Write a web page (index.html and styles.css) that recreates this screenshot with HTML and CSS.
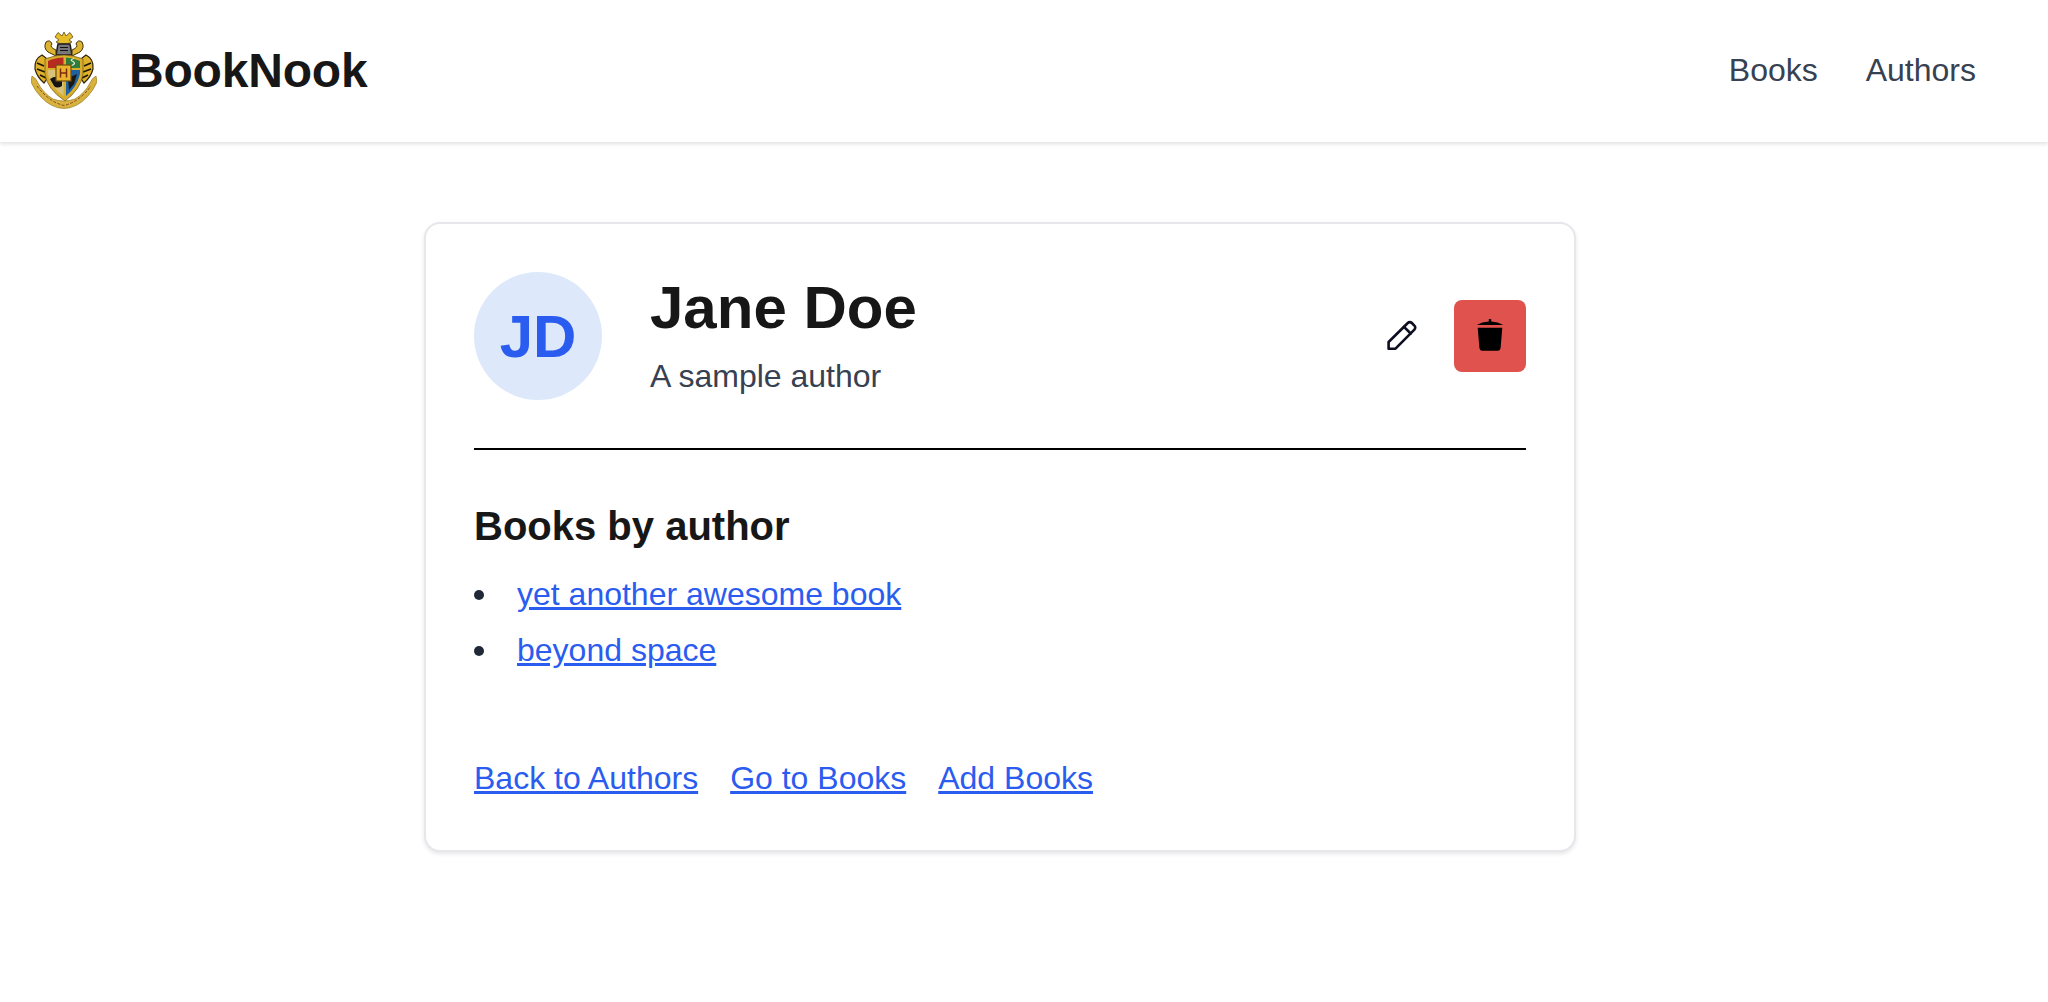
FILE: index.html
```html
<!DOCTYPE html>
<html lang="en">
<head>
<meta charset="utf-8">
<title>BookNook</title>
<link rel="stylesheet" href="styles.css">
</head>
<body>
<header class="topbar">
  <a class="brand" href="#">
    <svg class="crest" viewBox="0 0 66 80" aria-hidden="true">
      <path d="M1 45 Q5 47 7 52 Q12 62 22 68 Q33 72 44 68 Q54 62 59 52 Q61 47 65 45 L66 51 Q62 60 56 66 Q46 77 33 77.500 Q20 77 10 66 Q4 60 0 51 Z" fill="#d8b23f" stroke="#9c7a20" stroke-width=".7"/>
      <path d="M6 55 Q18 71 33 74.500 Q48 71 60 55" fill="none" stroke="#7d3f1b" stroke-width=".9" stroke-dasharray="3 1.500"/>
      <path d="M33 1 L35 5 L39 1.500 L42 6 L38 9 L41 11 L36 13 H30 L25 11 L28 9 L24 6 L27 1.500 L31 5 Z" fill="#e7bd2a" stroke="#4d3b0c" stroke-width=".7"/>
      <path d="M27 13 H39 L41 24 H25 Z" fill="#77777c" stroke="#1d1d1d" stroke-width="1.500"/>
      <path d="M29 16.500 H37 M29 19.500 H37" stroke="#111" stroke-width="1.200"/>
      <path d="M25 25 L17 21 Q12 17 15 11 Q19 8 21 13 Q18 16 25 19 Z" fill="#dcb42f" stroke="#3f300b" stroke-width="1"/>
      <path d="M41 25 L49 21 Q54 17 51 11 Q47 8 45 13 Q48 16 41 19 Z" fill="#dcb42f" stroke="#3f300b" stroke-width="1"/>
      <path d="M11 24 Q3 28 4 38 Q6 46 13 52 L17 46 L15 27 Z" fill="#e0b22c" stroke="#2f240a" stroke-width="1.200"/>
      <path d="M6 32 L13 35 M6 38 L14 41 M9 44 L15 47" stroke="#1d180a" stroke-width="1.800"/>
      <path d="M55 24 Q63 28 62 38 Q60 46 53 52 L49 46 L51 27 Z" fill="#e0b22c" stroke="#2f240a" stroke-width="1.200"/>
      <path d="M60 32 L53 35 M60 38 L52 41 M57 44 L51 47" stroke="#1d180a" stroke-width="1.800"/>
      <path d="M14 28 Q24 24 33 24 Q42 24 52 28 L52 43 Q50 58 34 70 Q16 58 14 43 Z" fill="#d9ae2c" stroke="#6b5312" stroke-width=".7"/>
      <path d="M17 30 Q24 26.500 32.500 26.500 V37 H17 Z" fill="#b72a20"/>
      <path d="M35 26.500 Q42 26.500 49 30 V37 H35 Z" fill="#2e7d3c"/>
      <path d="M17 39 H32.500 V65 Q20 56 17 43 Z" fill="#d8c27a"/>
      <path d="M35 39 H49 V43 Q46 56 35 65 Z" fill="#1f62a3"/>
      <path d="M19 48 Q24 44 31 47 L31 55 Q26 58 23 55 Z" fill="#151412"/>
      <path d="M37 47 L46 43 L43 53 L38 59 Z" fill="#1a1810"/>
      <path d="M39 35 Q46 33 42 30.500 Q38 29 43 27.500" fill="none" stroke="#e9e6d6" stroke-width="1.300"/>
      <rect x="25" y="34" width="15" height="16" fill="#e9b42b" stroke="#6f4d10" stroke-width="1.200"/>
      <path d="M29.500 37.500 V46.500 M35.500 37.500 V46.500 M29.500 42 H35.500" stroke="#7c2b12" stroke-width="1.500"/>
    </svg>
    <span class="brand-name">BookNook</span>
  </a>
  <nav class="nav">
    <a href="#">Books</a>
    <a href="#">Authors</a>
  </nav>
</header>
<main class="page">
  <section class="card">
    <div class="author">
      <div class="avatar">JD</div>
      <div class="author-info">
        <h1>Jane Doe</h1>
        <p>A sample author</p>
      </div>
      <div class="actions">
        <button class="icon-btn" type="button" aria-label="Edit">
          <svg viewBox="0 0 34 34" width="34" height="34" fill="none" stroke="#0e0e22" stroke-width="2.600" stroke-linejoin="round" stroke-linecap="round"><path d="M3.600 29.700 V23 L22.800 4 a2.800 2.800 0 0 1 4 0 l2.600 2.600 a2.800 2.800 0 0 1 0 4 L10.500 29.700 Z"/><path d="M19 7.800 L25.700 14.500"/></svg>
        </button>
        <button class="icon-btn danger" type="button" aria-label="Delete">
          <svg viewBox="0 -1 32 34" width="32" height="34" fill="#000"><path d="M2.700 5 Q8 2 14.800 1.600 V-1 H17.200 V1.600 Q24 2 29.300 5 Z"/><path d="M3.700 7.700 H28.300 L26.600 28 Q26.300 30.700 24 30.700 H8 Q5.700 30.700 5.400 28 Z"/></svg>
        </button>
      </div>
    </div>
    <hr class="rule">
    <h2>Books by author</h2>
    <ul class="books">
      <li><a href="#">yet another awesome book</a></li>
      <li><a href="#">beyond space</a></li>
    </ul>
    <div class="links">
      <a href="#">Back to Authors</a>
      <a href="#">Go to Books</a>
      <a href="#">Add Books</a>
    </div>
  </section>
</main>
</body>
</html>
```
FILE: styles.css
```css
* { box-sizing: border-box; }
html, body { margin: 0; padding: 0; }
body {
  min-height: 1002px;
  background: #fff;
  color: #171717;
  font-family: "Liberation Sans", Arial, sans-serif;
}
a { color: #2b5cf0; }
.topbar {
  display: flex;
  align-items: center;
  justify-content: space-between;
  height: 142px;
  padding: 0 72px 0 31px;
  background: #fff;
  box-shadow: 0 2px 4px rgba(0, 0, 0, 0.12);
}
.brand {
  display: flex;
  align-items: center;
  gap: 32px;
  color: #171717;
  text-decoration: none;
}
.crest { width: 66px; height: 80px; display: block; filter: blur(0.4px); }
.brand-name { font-size: 48px; font-weight: 700; line-height: 56px; letter-spacing: -0.2px; }
.nav { display: flex; gap: 48px; margin-top: -2px; }
.nav a { color: #374151; font-size: 32px; line-height: 40px; text-decoration: none; }
.page { display: flex; justify-content: center; padding: 80px 48px 0 0; }
.card {
  width: 1152px;
  height: 630px;
  padding: 48px;
  background: #fff;
  border: 2px solid #e5e7eb;
  border-radius: 16px;
  box-shadow: 0 2px 4px rgba(0, 0, 0, 0.1);
}
.author { display: flex; align-items: center; gap: 48px; }
.avatar {
  flex: none;
  display: flex;
  align-items: center;
  justify-content: center;
  width: 128px;
  height: 128px;
  border-radius: 50%;
  background: #dee8fb;
  color: #2b5cf0;
  font-size: 60px;
  font-weight: 700;
}
.author-info { flex: 1; }
h1 { margin: 0; font-size: 60px; line-height: 64px; font-weight: 700; }
.author-info p { margin: 16px 0 0; font-size: 32px; line-height: 40px; color: #374151; }
.actions { display: flex; align-items: center; gap: 16px; }
.icon-btn {
  display: flex;
  align-items: center;
  justify-content: center;
  width: 72px;
  height: 72px;
  padding: 0;
  background: transparent;
  border: 0;
  border-radius: 8px;
}
.danger { background: #e0524d; }
.rule { margin: 48px 0 0; border: 0; border-top: 2px solid #000; }
h2 { margin: 52px 0 0; font-size: 40px; line-height: 48px; font-weight: 700; }
.books { margin: 24px 0 0; padding: 0; list-style: none; }
.books li {
  display: flex;
  align-items: center;
  gap: 33px;
  margin-bottom: 16px;
  font-size: 32px;
  line-height: 40px;
}
.books li::before {
  content: "";
  width: 10px;
  height: 10px;
  margin-top: 2px;
  border-radius: 50%;
  background: #1f2937;
}
.links { display: flex; gap: 32px; margin-top: 88px; font-size: 32px; line-height: 40px; }
```
